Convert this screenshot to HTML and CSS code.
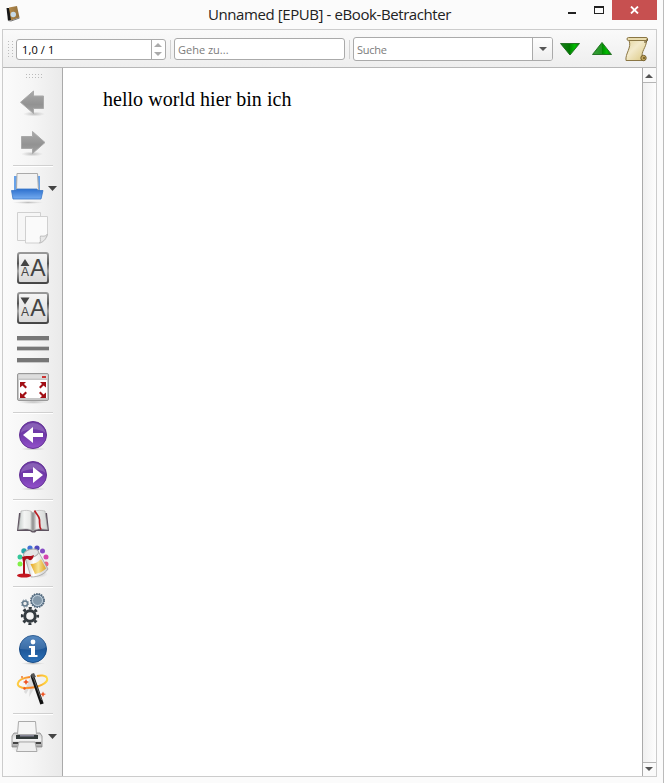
FILE: index.html
```html
<!DOCTYPE html>
<html lang="de">
<head>
<meta charset="utf-8">
<title>Unnamed [EPUB] - eBook-Betrachter</title>
<link rel="stylesheet" href="styles.css">
</head>
<body>
<div class="window">
  <header class="titlebar">
    <svg class="app-icon" width="18" height="20" viewBox="4 4 18 20">
      <path d="M6.500 8l3 0 2 12-3.500 1z" fill="#171717"/><path d="M9 7.500l8-1.500 2.500 11.500-8.500 3z" fill="url(#cover)"/><path d="M8 20.500l3 .5 8.500-3" fill="none" stroke="#777"/><circle cx="13.300" cy="14.500" r="2.700" fill="#c5d9e8"/>
    </svg>
    <h1 class="title">Unnamed [EPUB] - eBook-Betrachter</h1>
    <div class="controls">
      <svg width="50" height="20" viewBox="562 0 50 20" shape-rendering="crispEdges"><path d="M568 12h8v2h-8z" fill="#222"/><path d="M594 6h10v8h-10zM595 8v5h8V8z" fill="#222" fill-rule="evenodd"/></svg>
      <div class="close"><svg width="9" height="8" viewBox="0 0 9 8"><path d="M1 .5l7 7M8 .5l-7 7" stroke="#fff" stroke-width="1.800"/></svg></div>
    </div>
  </header>
  <div class="frame">
    <div class="toolbar">
      <i class="grip"></i>
      <div class="field spin"><span>1,0 / 1</span><svg width="14" height="19" viewBox="0 0 14 19"><path d="M.5 0v19" stroke="#aaa"/><path d="M3 7L7 3l4 4zM3 12l4 4 4-4z" fill="#aaa"/></svg></div>
      <i class="divider"></i>
      <div class="field goto"><span>Gehe zu...</span></div>
      <i class="divider"></i>
      <div class="field search"><span>Suche</span><div class="drop"><svg width="8" height="4" viewBox="0 0 8 4"><path d="M0 0h8L4 4z" fill="#555"/></svg></div></div>
      <svg class="tools" width="100" height="36" viewBox="553 31 100 36">
        <path d="M560.500 43.500h19L570 55z" fill="url(#green)" stroke="#267426"/><path d="M570 44v11l-9-11z" fill="#006000" opacity=".45"/>
        <path d="M592.500 54.500h19L602 42.500z" fill="url(#green)" stroke="#267426"/><path d="M602 43v11h-8z" fill="#5aa85a" opacity=".35"/>
        <path d="M629 40.500h17.500c0 7-6 11-4 17.500h2v2.500h-18.500c-1-7 6-13 3-20z" fill="url(#paper)" stroke="#8a7644"/>
        <rect x="627" y="37.500" width="20.500" height="3" rx="1.500" fill="#e9dcae" stroke="#8a7644"/><path d="M647 39c1 2 0 2-1 3h-2" fill="none" stroke="#5e4d24"/>
        <circle cx="643.500" cy="58" r="2.700" fill="#c3a75d" stroke="#756030"/><circle cx="644" cy="58" r="1" fill="#6b531d"/>
      </svg>
    </div>
    <div class="main">
      <nav class="sidebar">
        <i class="grip wide"></i>
        <svg class="tool" viewBox="3 0 59 40"><ellipse cx="34" cy="32" rx="11" ry="2.500" fill="url(#shade)"/><path d="M20.500 20.300L33.500 9v5h10v12.500h-10v5z" fill="url(#gray)" stroke="#a9a9a9"/></svg>
        <svg class="tool" viewBox="3 0 59 40"><ellipse cx="32" cy="32" rx="11" ry="2.500" fill="url(#shade)"/><path d="M45 20.500L32.500 9.500v5h-11v12h11v5z" fill="url(#gray)" stroke="#a9a9a9"/></svg>
        <i class="rule first"></i>
        <svg class="tool" viewBox="3 0 59 40"><ellipse cx="28" cy="34.500" rx="15" ry="1.500" fill="url(#shade)"/><path d="M14 8h26v15H14z" fill="#68a2e8"/><path d="M17 5.500h20.500l1 17h-22z" fill="#f2f2f2" stroke="#aaa"/><path d="M11.500 22.500H16l1-1.500h20l1 1.500h5L41 31H13z" fill="url(#blue)" stroke="#3976c8" stroke-width=".8"/><path d="M48 18h9l-4.500 5z" fill="#444"/></svg>
        <svg class="tool" viewBox="3 0 59 40"><path d="M17.500 4.500h23v28h-23z" fill="#f6f6f6" stroke="#d0d0d0"/><path d="M25.500 8.500h22v18c-1 4-4 8-8 8.500h-14z" fill="#fafafa" stroke="#d0d0d0"/><path d="M39.500 35c2-2 0-5 1-7 2 0 5 1 7-2-1 4-4 8-8 9z" fill="#e8e8e8" stroke="#bdbdbd"/></svg>
        <svg class="tool" viewBox="3 0 59 40"><rect x="18" y="5" width="30" height="30" rx="2" fill="url(#button)" stroke="url(#bevel)" stroke-width="2"/><path d="M20.500 18l4.500-7 4.500 7z" fill="#444"/><text class="glyph" x="21" y="28" font-size="12">A</text><text class="glyph" x="30.300" y="28" font-size="23">A</text></svg>
        <svg class="tool" viewBox="3 0 59 40"><rect x="18" y="5" width="30" height="30" rx="2" fill="url(#button)" stroke="url(#bevel)" stroke-width="2"/><path d="M20.500 9.500h9l-4.500 7z" fill="#444"/><text class="glyph" x="21" y="28" font-size="12">A</text><text class="glyph" x="30.300" y="28" font-size="23">A</text></svg>
        <svg class="tool" viewBox="3 0 59 40" shape-rendering="crispEdges"><path d="M17 8h32v4H17zM17 19h32v3H17zM17 30h32v4H17z" fill="#777"/><path d="M17 12h32v1H17zM17 18h32v1H17zM17 22h32v1H17zM17 34h32v1H17z" fill="#c8c8c8"/></svg>
        <svg class="tool" viewBox="3 0 59 40"><ellipse cx="33" cy="34" rx="15" ry="2" fill="url(#shade)"/><rect x="17.500" y="5.500" width="31" height="27" rx="1.500" fill="#c6c6c6" stroke="#999"/><path d="M18.500 6.500h29v4h-29z" fill="#ddd"/><path d="M19 12h28v18H19z" fill="#fff"/><path d="M42 8h4v2h-4z" fill="#c33"/><path d="M20 14h6l-2 2 3 3-1.500 1.500-3-3-2.500 2zM46 14h-6l2 2-3 3 1.500 1.500 3-3 2.500 2zM20 30h6l-2-2 3-3-1.500-1.500-3 3-2.500-2zM46 30h-6l2-2-3-3 1.500-1.500 3 3 2.500-2z" fill="#a10f15"/></svg>
        <i class="rule"></i>
        <svg class="tool" viewBox="3 0 59 40"><ellipse cx="33" cy="34" rx="13" ry="1.500" fill="url(#shade)"/><circle cx="33" cy="20" r="13.500" fill="url(#purple)" stroke="#633095"/><path d="M20.500 18a12.800 12.800 0 0125 0c-6-5-19-5-25 0z" fill="#fff" opacity=".18"/><path d="M23 20l10-8v6h10v4H33v6z" fill="#fff"/></svg>
        <svg class="tool" viewBox="3 0 59 40"><ellipse cx="33" cy="34" rx="13" ry="1.500" fill="url(#shade)"/><circle cx="33" cy="20" r="13.500" fill="url(#purple)" stroke="#633095"/><path d="M20.500 18a12.800 12.800 0 0125 0c-6-5-19-5-25 0z" fill="#fff" opacity=".18"/><path d="M43 20l-10-8v6H23v4h10v6z" fill="#fff"/></svg>
        <i class="rule"></i>
        <svg class="tool" viewBox="3 0 59 40"><path d="M19 11l-2 18h13l2 1.500h3l1.500-1.500H49l-2-18z" fill="#5d525f"/><path d="M21 9c5-1 10-1 12 2v18c-4-3-10-2-14.500-1.500z" fill="url(#leftpage)" stroke="#aaa" stroke-width=".6"/><path d="M45 9c-5-1-10-1-12 2v18c4-3 10-2 14.500-1.500z" fill="url(#rightpage)" stroke="#aaa" stroke-width=".6"/><path d="M34.500 8.500c2 4 4.500 5 5 9 .3 4-.5 7 1.500 10" fill="none" stroke="#b91f25" stroke-width="1.700"/></svg>
        <svg class="tool" viewBox="3 0 59 40"><circle cx="24" cy="9" r="2.700" fill="#27a5a8"/><circle cx="30" cy="6" r="2.600" fill="#3f70d6"/><circle cx="37" cy="6" r="2.600" fill="#5149bd"/><circle cx="42.500" cy="9" r="2.500" fill="#874bc5"/><circle cx="46" cy="15" r="2.500" fill="#d344ae"/><circle cx="46" cy="22" r="2.500" fill="#eb6682"/><circle cx="20" cy="15" r="2.500" fill="#35c79a"/><circle cx="20" cy="22" r="2.500" fill="#82ef47"/><ellipse cx="38" cy="32" rx="10" ry="4" fill="url(#shade)"/><path d="M24 12.500L38 9l10 18c-3 5-10 8-17 8z" fill="url(#can)" stroke="#999" stroke-width=".7"/><ellipse cx="31" cy="11.500" rx="7.700" ry="4.200" transform="rotate(-15 31 11.500)" fill="#e4e4e4" stroke="#aaa"/><path d="M30.500 22c4 0 8-2 10.500-5l5 9.500c-3 3-7 5-11 5.500z" fill="url(#amber)"/><path d="M22 15c4-2 8 0 12-2-1 4-3 7-6 4-2-1-3 1-3 3v12h-2V20z" fill="#ad0c17"/><ellipse cx="24" cy="33.500" rx="7" ry="2" fill="#c4161f"/></svg>
        <i class="rule"></i>
        <svg class="tool" viewBox="3 0 59 40"><circle cx="37.500" cy="11.500" r="6.700" fill="#738ba0" stroke="#52677a" stroke-dasharray="1.500 1" stroke-width="1.600"/><circle cx="37.500" cy="11.500" r="5" fill="#8499aa" stroke="#c8d6e0"/><circle cx="25" cy="14.500" r="2.500" fill="#eee" stroke="#647b8c" stroke-width="1.500"/><circle cx="25" cy="14.500" r="3.700" fill="none" stroke="#647b8c" stroke-dasharray="1.300 1.600"/><circle cx="30" cy="27" r="5.300" fill="none" stroke="#343b40" stroke-width="3"/><circle cx="30" cy="27" r="7.800" fill="none" stroke="#343b40" stroke-width="2.600" stroke-dasharray="3 3.126" stroke-dashoffset="1.500"/></svg>
        <svg class="tool" viewBox="3 0 59 40"><ellipse cx="33" cy="34.500" rx="12" ry="1.500" fill="url(#shade)"/><circle cx="33" cy="20" r="13.500" fill="url(#info)" stroke="#174b87"/><path d="M20 20a13 13 0 0126-2c-7 5-18 2-26 2z" fill="#fff" opacity=".13"/><circle cx="33" cy="13" r="2.400" fill="#fff"/><path d="M29 17h6v9h2.500v2H28.500v-2H31v-7h-2z" fill="#fff"/></svg>
        <svg class="tool" viewBox="3 0 59 40"><path d="M31 7L24 23l2 2 4-7-1 10 6-10 7 15z" fill="#ccc" opacity=".6"/><path d="M30 8C15 10 14 19 26 19c12 0 23-5 21-10-1-3-7-3-10-2" fill="none" stroke="url(#flame)" stroke-width="2"/><path d="M32 6l10 29" stroke="#111" stroke-width="3.600"/><path d="M31 5l3-1 2 4-4 1z" fill="#555"/><path d="M33.500 9l8 22" stroke="#777" stroke-width=".8"/><path d="M26 10l1 2 2 1-2 1-1 2-1-2-2-1 2-1zM43 22.500l1 2 2 .5-2 1-1 2-1-2-2-1 2-.5zM25 18l1 2-2 1-1-2z" fill="#ee5524"/><circle cx="22" cy="8" r="1" fill="#ee7735"/></svg>
        <i class="rule"></i>
        <svg class="tool" viewBox="3 0 59 40"><ellipse cx="27" cy="33" rx="16" ry="3" fill="url(#shade)"/><path d="M14 17h26l2 3v11H12V20z" fill="url(#printer)" stroke="#888" stroke-width=".8"/><path d="M18.500 5.500h17l1 13h-19z" fill="#f5f5f5" stroke="#aaa"/><path d="M16 19h22v4H16z" fill="#343b3b"/><path d="M20 19h14v1.500H20z" fill="#889"/><path d="M13 26h28v2H13z" fill="#444"/><path d="M19 26h16l2 9.500H16.500z" fill="#eee" stroke="#aaa"/><path d="M48 18h9l-4.500 5z" fill="#444"/></svg>
      </nav>
      <article class="page">hello world hier bin ich</article>
      <div class="scrollbar"><div class="step"><svg width="8" height="4" viewBox="0 0 8 4"><path d="M0 4h8L4 0z" fill="#555"/></svg></div><div class="step end"><svg width="8" height="4" viewBox="0 0 8 4"><path d="M0 0h8L4 4z" fill="#555"/></svg></div></div>
    </div>
  </div>
</div>
<svg class="defs" width="0" height="0"><defs>
<linearGradient id="cover"><stop stop-color="#b38a4a"/><stop offset="1" stop-color="#91703e"/></linearGradient>
<linearGradient id="green"><stop stop-color="#2e9c33"/><stop offset=".5" stop-color="#008a00"/><stop offset=".75" stop-color="#00be00"/><stop offset="1" stop-color="#007a00"/></linearGradient>
<linearGradient id="paper" x2="1" y2="1"><stop stop-color="#e4d6a0"/><stop offset=".4" stop-color="#f3eacb"/><stop offset="1" stop-color="#dac67e"/></linearGradient>
<radialGradient id="shade"><stop stop-color="#555" stop-opacity=".35"/><stop offset="1" stop-color="#777" stop-opacity="0"/></radialGradient>
<linearGradient id="gray" x2="0" y2="1"><stop stop-color="#aaa"/><stop offset=".6" stop-color="#929292"/><stop offset="1" stop-color="#a3a3a3"/></linearGradient>
<linearGradient id="blue" x2="0" y2="1"><stop stop-color="#2d70ce"/><stop offset="1" stop-color="#75acf0"/></linearGradient>
<linearGradient id="button" x2="0" y2="1"><stop stop-color="#f6f6f6"/><stop offset="1" stop-color="#d8d8d8"/></linearGradient>
<linearGradient id="bevel" x2="0" y2="1"><stop stop-color="#999"/><stop offset=".35" stop-color="#555"/><stop offset=".6" stop-color="#aaa"/><stop offset="1" stop-color="#444"/></linearGradient>
<linearGradient id="purple" x2="0" y2="1"><stop stop-color="#6c3da4"/><stop offset=".5" stop-color="#7139aa"/><stop offset="1" stop-color="#9351cb"/></linearGradient>
<linearGradient id="info" x2="0" y2="1"><stop stop-color="#3d78b8"/><stop offset=".5" stop-color="#1e5799"/><stop offset="1" stop-color="#2d72b9"/></linearGradient>
<linearGradient id="leftpage"><stop stop-color="#c4ccc9"/><stop offset=".4" stop-color="#f4f5f4"/><stop offset=".8" stop-color="#e7e9e7"/><stop offset="1" stop-color="#777"/></linearGradient>
<linearGradient id="rightpage"><stop stop-color="#888"/><stop offset=".25" stop-color="#eee"/><stop offset="1" stop-color="#d1d6d3"/></linearGradient>
<linearGradient id="can"><stop stop-color="#bbb"/><stop offset=".4" stop-color="#fff"/><stop offset="1" stop-color="#ccc"/></linearGradient>
<linearGradient id="amber"><stop stop-color="#e5a51e"/><stop offset=".5" stop-color="#f7e493"/><stop offset="1" stop-color="#dda325"/></linearGradient>
<linearGradient id="flame"><stop stop-color="#ffcf45"/><stop offset=".45" stop-color="#f67b20"/><stop offset="1" stop-color="#ffdc43"/></linearGradient>
<linearGradient id="printer" x2="0" y2="1"><stop stop-color="#ccc"/><stop offset=".5" stop-color="#f5f5f5"/><stop offset="1" stop-color="#999"/></linearGradient>
</defs></svg>
</body>
</html>
```
FILE: styles.css
```css
* { box-sizing: border-box; }
body { margin: 0; width: 664px; height: 783px; overflow: hidden; background: #fbfbfb; }
svg { display: block; flex: none; }
.defs { position: absolute; }
.window { height: 783px; border-right: 1px solid #bbb; padding: 0 6px 6px 2px; display: flex; flex-direction: column; }
.titlebar { height: 29px; display: flex; flex: none; }
.app-icon { margin: 4px 0 0 2px; }
.title { margin: 0 0 0 186px; width: 244px; font: 400 15px/28px "Open Sans", sans-serif; letter-spacing: -.41px; white-space: nowrap; color: #222; }
.controls { margin-left: auto; display: flex; height: 20px; }
.close { width: 45px; height: 20px; background: #c75050; display: grid; place-items: center; }
.frame { flex: 1; min-height: 0; border: 1px solid #ccc; width: 655px; display: flex; flex-direction: column; }
.toolbar { height: 38px; flex: none; border-bottom: 1px solid #b7b7b7; background: linear-gradient(#fafafa, #eee); display: flex; align-items: center; padding: 1px 0 0 5px; }
.grip { width: 5px; height: 17px; background: radial-gradient(circle at .5px .5px, #bbb .6px, transparent .7px) 0 0 / 4px 3px; }
.field { background: #fff; border: 1px solid #aaa; border-radius: 3px; display: flex; align-items: stretch; justify-content: space-between; font: 11px/22px "Open Sans", sans-serif; color: #7b7b7b; overflow: hidden; }
.spin { width: 150px; height: 21px; margin: 1px 0 0 3px; padding-left: 5px; color: #000; line-height: 20px; letter-spacing: .12px; }
.goto { width: 171px; height: 22px; padding-left: 3px; }
.search { width: 200px; height: 24px; padding-left: 3px; line-height: 24px; letter-spacing: -.25px; }
.divider { width: 1px; height: 19px; background: #d2d2d2; margin: 0 3px 0 4px; }
.drop { width: 20px; border-left: 1px solid #aaa; background: linear-gradient(#fdfdfd, #eee); display: grid; place-items: center; }
.main { flex: 1; min-height: 0; display: flex; background: #fff; }
.sidebar { width: 60px; flex: none; border-right: 1px solid #aaa; background: linear-gradient(90deg, #fbfbfb, #f5f5f5 50%, #eaeaea); display: flex; flex-direction: column; }
.wide { width: 17px; height: 4px; margin: 6px 0 4px 23px; background-size: 3px 3px; flex: none; }
.tool { width: 59px; height: 40px; }
.rule { height: 2px; margin: 4px 9px 1px 10px; background: #d0d0d0; border-bottom: 1px solid #fff; flex: none; }
.first { margin-top: 3px; }
.glyph { font-family: "Liberation Sans", sans-serif; fill: #444; }
.page { flex: 1; padding: 20px 0 0 40px; font: 20px/23px "Liberation Serif", serif; letter-spacing: .03px; color: #000; }
.scrollbar { width: 14px; border-left: 1px solid #aaa; background: linear-gradient(90deg, #f0f0f0, #fdfdfd); display: flex; flex-direction: column; justify-content: space-between; }
.step { height: 15px; padding: 2px 1px 0 0; border-bottom: 1px solid #b5b5b5; display: grid; place-items: center; background: #fafafa; }
.end { height: 14px; padding: 0 1px 1px 0; border-top: 1px solid #b5b5b5; border-bottom: 0; }
```
